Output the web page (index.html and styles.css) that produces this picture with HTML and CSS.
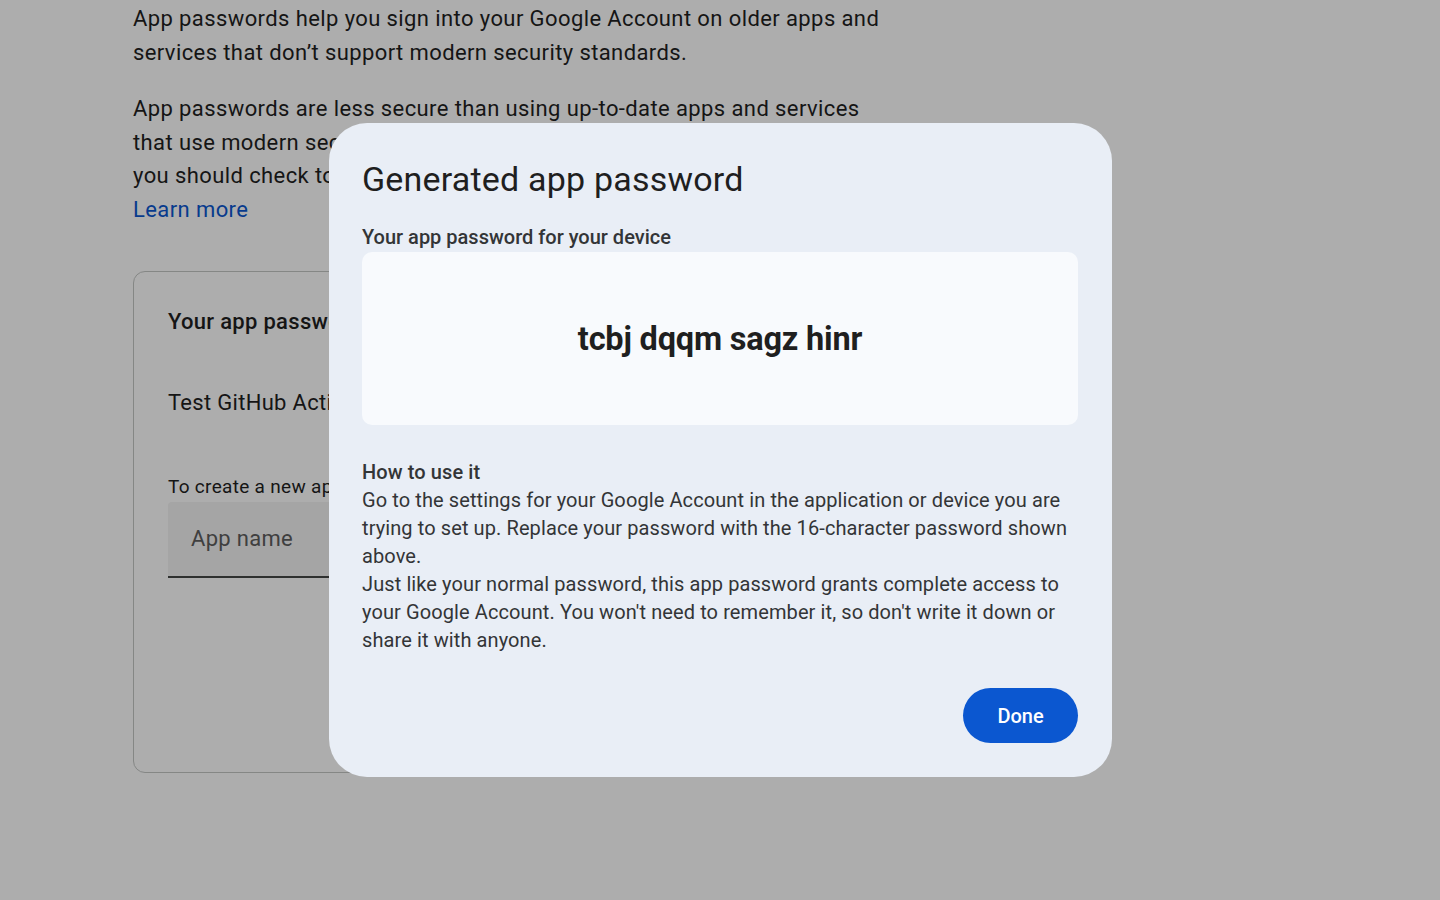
FILE: index.html
```html
<!DOCTYPE html>
<html>
<head>
  <title>App passwords</title>
  <link rel="stylesheet" href="styles.css">
</head>
<body>
  <div class="page">
    <p class="intro">App passwords help you sign into your Google Account on older apps and services that don’t support modern security standards.</p>
    <p class="intro">App passwords are less secure than using up-to-date apps and services that use modern security standards. Before you create an app password, you should check to see if your app needs this in order to sign in.<br><a href="#" class="link">Learn more</a></p>

    <div class="card">
      <div class="card-title">Your app passwords</div>
      <div class="app-row">Test GitHub Actions</div>
      <div class="create-label">To create a new app specific password, type a name for it below...</div>
      <div class="field">App name</div>
    </div>
  </div>

  <div class="scrim"></div>

  <div class="dialog">
    <h1 class="dialog-title">Generated app password</h1>
    <div class="dialog-label">Your app password for your device</div>
    <div class="password-box">
      <span class="password">tcbj dqqm sagz hinr</span>
    </div>
    <div class="howto">
      <div class="howto-title">How to use it</div>
      <p>Go to the settings for your Google Account in the application or device you are trying to set up. Replace your password with the 16-character password shown above.</p>
      <p>Just like your normal password, this app password grants complete access to your Google Account. You won't need to remember it, so don't write it down or share it with anyone.</p>
    </div>
    <div class="actions">
      <button class="done">Done</button>
    </div>
  </div>
</body>
</html>
```

FILE: styles.css
```css
body {
  margin: 0;
  background: #ffffff;
  font-family: Roboto, "Noto Sans", Arial, sans-serif;
  color: #1f1f1f;
  height: 900px;
  overflow: hidden;
}

.page {
  width: 760px;
  padding: 2px 0 0 133px;
}

.intro {
  margin: 0 0 23px;
  font-size: 22px;
  line-height: 33.5px;
  letter-spacing: 0.4px;
  color: #1f1f1f;
}

.link {
  color: #0b57d0;
  text-decoration: none;
}

.card {
  margin-top: 45px;
  width: 900px;
  height: 502px;
  border: 1px solid #c4c7c5;
  border-radius: 12px;
  padding: 33px 34px 0;
  box-sizing: border-box;
  white-space: nowrap;
  overflow: hidden;
}

.card-title {
  font-size: 22px;
  font-weight: 500;
  line-height: 33px;
  letter-spacing: 0.3px;
}

.app-row {
  margin-top: 48px;
  font-size: 22px;
  line-height: 33px;
  letter-spacing: 0.3px;
}

.create-label {
  margin-top: 55px;
  font-size: 19px;
  line-height: 26px;
  letter-spacing: 0.3px;
  color: #1f1f1f;
}

.field {
  margin-top: 2px;
  height: 74px;
  width: 500px;
  background: #f3f3f3;
  border-bottom: 2px solid #444746;
  border-radius: 4px 4px 0 0;
  padding-left: 23px;
  font-size: 22px;
  line-height: 74px;
  letter-spacing: 0.3px;
  color: #5e5e5e;
}

.scrim {
  position: fixed;
  inset: 0;
  background: rgba(0, 0, 0, 0.32);
}

.dialog {
  position: fixed;
  left: 329px;
  top: 123px;
  width: 783px;
  height: 654px;
  box-sizing: border-box;
  padding: 34px 34px 0 33px;
  background: #e9eef6;
  border-radius: 38px;
  display: flex;
  flex-direction: column;
}

.dialog-title {
  margin: 0;
  font-size: 34px;
  font-weight: 400;
  line-height: 44px;
  letter-spacing: 0.2px;
  color: #1f1f1f;
}

.dialog-label {
  margin-top: 23px;
  font-size: 20px;
  font-weight: 500;
  line-height: 26px;
  color: #333537;
}

.password-box {
  margin-top: 2px;
  height: 173px;
  background: #f8fafd;
  border-radius: 10px;
  display: flex;
  align-items: center;
  justify-content: center;
}

.password {
  font-size: 32.5px;
  font-weight: 700;
  color: #1f1f1f;
  letter-spacing: -0.2px;
}

.howto {
  margin-top: 33px;
  font-size: 20px;
  line-height: 28px;
  letter-spacing: 0.1px;
  color: #333537;
}

.howto-title {
  font-weight: 500;
}

.howto p {
  margin: 0;
}

.actions {
  display: flex;
  justify-content: flex-end;
  margin-top: 34px;
}

.done {
  width: 115px;
  height: 55px;
  border: none;
  border-radius: 28px;
  background: #0b57d0;
  color: #ffffff;
  font-family: inherit;
  font-size: 20px;
  font-weight: 500;
  cursor: pointer;
}
```
